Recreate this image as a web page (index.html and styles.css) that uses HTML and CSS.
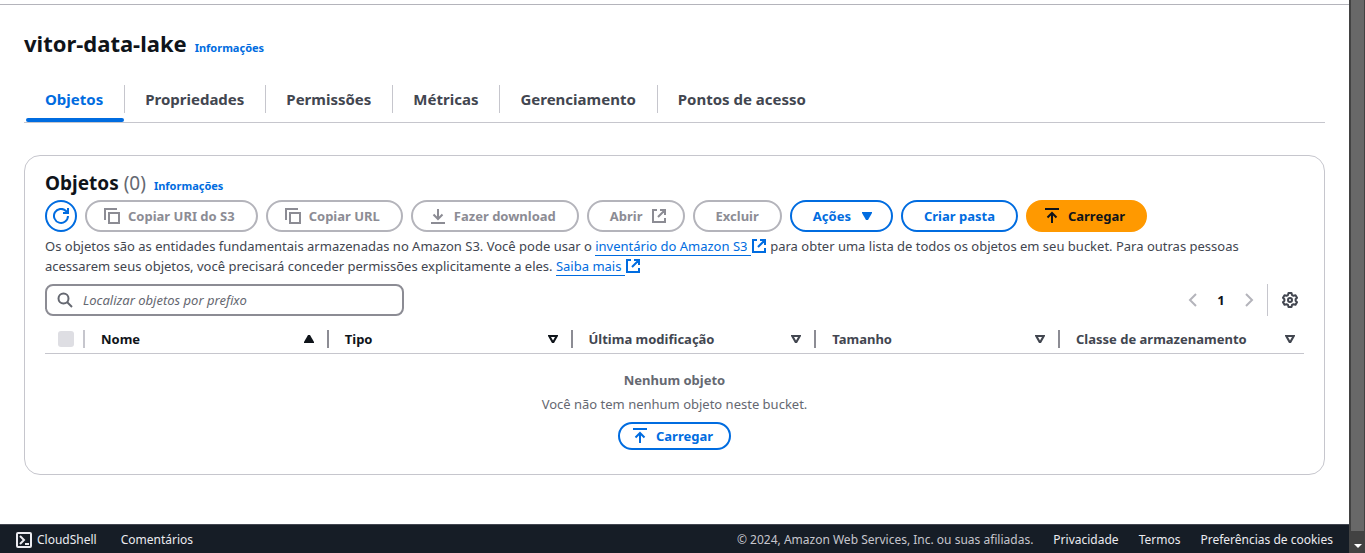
FILE: index.html
```html
<!DOCTYPE html>
<html lang="pt">
<head>
<meta charset="utf-8">
<title>vitor-data-lake</title>
<link rel="stylesheet" href="styles.css">
</head>
<body>
<svg class="sprite" aria-hidden="true">
  <symbol id="i-copy" viewBox="0 0 16 16"><path d="M1 12V1h12M5 5h10v10H5z"/></symbol>
  <symbol id="i-download" viewBox="0 0 16 16"><path d="M8 1v10M3.500 6.500L8 11l4.500-4.500M1 15h14"/></symbol>
  <symbol id="i-upload" viewBox="0 0 16 16"><path d="M1 1h14M8 15V5M3.500 9.500L8 5l4.500 4.500"/></symbol>
  <symbol id="i-external" viewBox="0 0 16 16"><path d="M6 2H2v12h12v-4M9 2h5v5M14 2L7 9"/></symbol>
  <symbol id="i-sort" viewBox="0 0 16 16"><path fill-rule="evenodd" d="M3 4h10v1l-4 7H7L3 5zM6 6l2 3.500L10 6z"/></symbol>
</svg>
<div class="window">
  <div class="page">
    <main class="content">
      <header class="title">
        <h1>vitor-data-lake</h1>
        <a class="info" href="#">Informações</a>
      </header>
      <nav class="tabs" aria-label="Seções">
        <a class="tab active" href="#">Objetos</a>
        <a class="tab" href="#">Propriedades</a>
        <a class="tab" href="#">Permissões</a>
        <a class="tab" href="#">Métricas</a>
        <a class="tab" href="#">Gerenciamento</a>
        <a class="tab" href="#">Pontos de acesso</a>
      </nav>
      <section class="card">
        <div class="heading">
          <h2>Objetos <span class="count">(0)</span></h2>
          <a class="info" href="#">Informações</a>
        </div>
        <div class="actions">
          <button class="btn round" aria-label="Atualizar"><svg class="icon" viewBox="0 0 16 16"><path d="M15 8a7 7 0 1 1-2-5l1 1.500M10 5h5V0"/></svg></button>
          <button class="btn" disabled><svg class="icon lead"><use href="#i-copy"/></svg>Copiar URI do S3</button>
          <button class="btn" disabled><svg class="icon lead"><use href="#i-copy"/></svg>Copiar URL</button>
          <button class="btn" disabled><svg class="icon lead"><use href="#i-download"/></svg>Fazer download</button>
          <button class="btn trailing" disabled>Abrir<svg class="icon"><use href="#i-external"/></svg></button>
          <button class="btn" disabled>Excluir</button>
          <button class="btn trailing">Ações<svg class="icon filled" viewBox="0 0 16 16"><path d="M3 4h10v1l-4 7H7L3 5z"/></svg></button>
          <button class="btn">Criar pasta</button>
          <button class="btn primary"><svg class="icon lead"><use href="#i-upload"/></svg>Carregar</button>
        </div>
        <p class="description">Os objetos são as entidades fundamentais armazenadas no Amazon S3. Você pode usar o <a href="#">inventário do Amazon S3 </a><svg class="icon link-icon"><use href="#i-external"/></svg> para obter uma lista de todos os objetos em seu bucket. Para outras pessoas acessarem seus objetos, você precisará conceder permissões explicitamente a eles. <a href="#">Saiba mais </a><svg class="icon link-icon"><use href="#i-external"/></svg></p>
        <div class="tools">
          <label class="search">
            <svg class="icon" viewBox="0 0 16 16"><circle cx="6.500" cy="6.500" r="5"/><path d="M10 10l5 5"/></svg>
            <input type="search" placeholder="Localizar objetos por prefixo" aria-label="Localizar objetos por prefixo">
          </label>
          <div class="pager">
            <button class="plain faint" disabled aria-label="Página anterior"><svg class="icon" viewBox="0 0 16 16"><path d="M11 2L5 8l6 6"/></svg></button>
            <button class="plain page-number">1</button>
            <button class="plain faint" disabled aria-label="Próxima página"><svg class="icon" viewBox="0 0 16 16"><path d="M5 2l6 6-6 6"/></svg></button>
            <button class="plain settings" aria-label="Preferências"><svg class="icon" viewBox="0 0 16 16"><path stroke-linejoin="round" d="M6.500 1h3l.5 2 1.500.8 2-.6L15 5.800 13.600 7.300v1.400L15 10.200l-1.500 2.600-2-.6L10 13l-.5 2h-3L6 13l-1.500-.8-2 .6L1 10.200l1.400-1.500V7.300L1 5.800l1.500-2.600 2 .6L6 3z"/><circle cx="8" cy="8" r="2"/></svg></button>
          </div>
        </div>
        <table class="objects">
          <thead>
            <tr>
              <th class="select"><input type="checkbox" disabled aria-label="Selecionar tudo"></th>
              <th class="strong"><div class="th">Nome<svg class="icon filled" viewBox="0 0 16 16"><path d="M3 12h10v-1L9 4H7l-4 7z"/></svg></div></th>
              <th class="strong"><div class="th">Tipo<svg class="icon filled"><use href="#i-sort"/></svg></div></th>
              <th><div class="th">Última modificação<svg class="icon filled"><use href="#i-sort"/></svg></div></th>
              <th><div class="th">Tamanho<svg class="icon filled"><use href="#i-sort"/></svg></div></th>
              <th class="last"><div class="th">Classe de armazenamento<svg class="icon filled"><use href="#i-sort"/></svg></div></th>
            </tr>
          </thead>
          <tbody>
            <tr>
              <td colspan="6">
                <div class="empty">
                  <strong>Nenhum objeto</strong>
                  <span>Você não tem nenhum objeto neste bucket.</span>
                  <button class="btn small"><svg class="icon lead"><use href="#i-upload"/></svg>Carregar</button>
                </div>
              </td>
            </tr>
          </tbody>
        </table>
      </section>
    </main>
    <footer class="footer">
      <a class="shell" href="#"><svg class="icon" viewBox="0 0 16 16"><rect x="1" y="1" width="14" height="14" rx="1"/><path d="M4 4l4 4-4 4M9 12h4"/></svg>CloudShell</a>
      <a href="#">Comentários</a>
      <span class="copyright">© 2024, Amazon Web Services, Inc. ou suas afiliadas.</span>
      <a href="#">Privacidade</a>
      <a href="#">Termos</a>
      <a href="#">Preferências de cookies</a>
    </footer>
  </div>
  <div class="scrollbar" aria-hidden="true">
    <div class="thumb"></div>
    <svg class="arrow" viewBox="0 0 8 4"><path d="M0 0h8L4 4z"/></svg>
  </div>
</div>
</body>
</html>
```
FILE: styles.css
```css
* { box-sizing: border-box; }
body {
  margin: 0;
  background: #fff;
  color: #424650;
  font: 13px/20px "Noto Sans", "Open Sans", sans-serif;
}
a { color: #006ce0; text-decoration: none; }
h1, h2, p { margin: 0; }
button, input { font: inherit; }
.sprite { position: absolute; width: 0; height: 0; }
.icon {
  width: 16px;
  height: 16px;
  flex: none;
  fill: none;
  stroke: currentColor;
  stroke-width: 2;
}
.icon.filled { fill: currentColor; stroke: none; }

.window { display: flex; min-height: 100vh; }
.page { flex: 1; min-width: 0; display: flex; flex-direction: column; }
.content {
  flex: 1;
  margin-top: 4px;
  padding: 22px 24px 48px;
  border-top: 1px solid #b4b4bb;
}
.title, .heading { display: flex; align-items: baseline; gap: 8px; }
h1 { font-size: 22px; line-height: 32px; color: #0f141a; font-weight: 700; }
h2 { font-size: 19px; line-height: 24px; color: #0f141a; font-weight: 700; }
.count { color: #656871; font-weight: 400; }
.info { font-size: 11px; line-height: 16px; font-weight: 700; }

.tabs { display: flex; margin-top: 21px; border-bottom: 1px solid #c6c6cd; }
.tab {
  position: relative;
  margin: 5px 0 9px;
  padding: 0 21px 0 20px;
  border-left: 1px solid #c6c6cd;
  color: #424650;
  font-size: 15px;
  line-height: 28px;
  font-weight: 700;
}
.tab:first-child { border-left-color: transparent; }
.tab.active { color: #006ce0; }
.tab.active::after {
  content: "";
  position: absolute;
  left: 1px;
  right: 0;
  bottom: -9px;
  height: 4px;
  border-radius: 2px;
  background: #006ce0;
}

.card {
  margin-top: 32px;
  padding: 15px 20px 24px;
  border: 1px solid #c6c6cd;
  border-radius: 16px;
}
.actions { display: flex; flex-wrap: wrap; gap: 8px; margin-top: 5px; }
.btn {
  display: inline-flex;
  align-items: center;
  justify-content: center;
  gap: 8px;
  height: 32px;
  padding: 0 21px;
  border: 2px solid #006ce0;
  border-radius: 20px;
  background: #fff;
  color: #006ce0;
  font-weight: 700;
  white-space: nowrap;
}
.btn .lead { margin-left: -4px; }
.btn.trailing { padding-right: 16px; }
.btn:disabled { border-color: #b4b4bb; color: #8c8c94; }
.btn.round { width: 32px; padding: 0; }
.btn.primary { padding: 0 20px; border-color: #ff9900; background: #ff9900; color: #0f141a; }
.btn.small { height: 28px; padding: 0 16px; }

.description { margin-top: 4px; }
.description a { border-bottom: 1px solid #006ce0; white-space: pre; }
.link-icon { color: #006ce0; vertical-align: -3px; }

.tools { display: flex; justify-content: space-between; margin-top: 8px; }
.search {
  display: flex;
  align-items: center;
  gap: 10px;
  width: 359px;
  height: 32px;
  padding: 0 10px;
  border: 2px solid #8c8c94;
  border-radius: 8px;
  color: #656871;
}
.search input {
  flex: 1;
  min-width: 0;
  padding: 0;
  border: 0;
  outline: 0;
  background: none;
}
.search input::placeholder { color: #656871; font-style: italic; opacity: 1; }
.pager { display: flex; align-items: center; }
.plain {
  display: flex;
  align-items: center;
  justify-content: center;
  width: 28px;
  height: 32px;
  padding: 0;
  border: 0;
  background: none;
  color: #424650;
}
.faint { color: #b4b4bb; }
.page-number { color: #0f141a; font-weight: 700; }
.settings { width: 37px; margin-left: 4px; padding-left: 8px; border-left: 1px solid #c6c6cd; }

.objects { width: 100%; margin-top: 8px; border-collapse: collapse; table-layout: fixed; }
.objects th {
  height: 29px;
  padding: 2px 0 0;
  border-bottom: 1px solid #c6c6cd;
  color: #424650;
  font-weight: 700;
  text-align: left;
}
.objects th.strong { color: #0f141a; }
.objects .select { width: 38px; }
.objects .last { width: 246px; }
.objects td { padding: 0; }
.th {
  display: flex;
  align-items: center;
  justify-content: space-between;
  height: 18px;
  padding: 0 10px 0 16px;
  border-left: 2px solid #8c8c94;
}
.last .th { padding-right: 6px; }
.select + th .th { border-left-color: #c6c6cd; }
.select input {
  display: block;
  appearance: none;
  width: 16px;
  height: 16px;
  margin: 0 0 0 13px;
  border-radius: 3px;
  background: #dedee3;
}
.empty {
  display: flex;
  flex-direction: column;
  align-items: center;
  gap: 4px;
  padding-top: 16px;
  color: #656871;
}
.empty .btn { margin-top: 4px; }

.footer {
  display: flex;
  align-items: center;
  gap: 20px;
  height: 29px;
  padding: 2px 16px 0;
  border-top: 1px solid #424650;
  background: #161d26;
  color: #c6c6cd;
  font-size: 12px;
  white-space: nowrap;
}
.footer a { color: #ebebf0; }
.footer .shell { display: flex; align-items: center; gap: 5px; margin-right: 4px; }
.copyright { margin-left: auto; }

.scrollbar {
  display: flex;
  flex-direction: column;
  align-items: center;
  width: 16px;
  padding: 0 1px 5px 2px;
  background: #424242;
}
.thumb { flex: 1; width: 100%; background: #686868; }
.arrow { width: 8px; height: 4px; margin-top: 13px; fill: #fff; }
```
